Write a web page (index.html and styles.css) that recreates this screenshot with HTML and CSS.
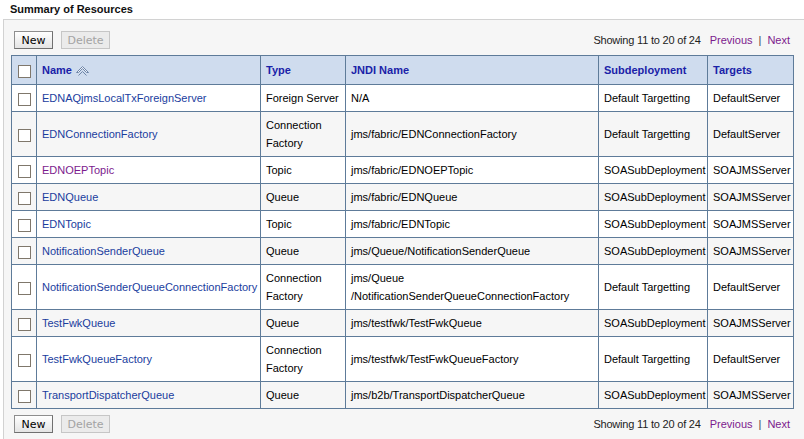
FILE: index.html
```html
<!DOCTYPE html>
<html>
<head>
<meta charset="utf-8">
<link rel="stylesheet" href="styles.css">
</head>
<body>
<div class="title">Summary of Resources</div>
<div class="panel">
  <div class="bar">
    <div class="buttons">
      <span class="btn">New</span>
      <span class="btn disabled">Delete</span>
    </div>
    <div class="pager">
      <span class="showing">Showing 11 to 20 of 24</span>
      <a class="plink">Previous</a>
      <span class="sep">|</span>
      <a class="plink">Next</a>
    </div>
  </div>
  <table class="grid">
    <colgroup>
      <col class="c-check"><col class="c-name"><col class="c-type"><col class="c-jndi"><col class="c-sub"><col class="c-tgt">
    </colgroup>
    <thead>
      <tr>
        <th class="chk"><span class="box"></span></th>
        <th><span class="hname">Name</span><svg class="sort" width="13" height="10" viewBox="0 0 13 10"><path d="M0.5 6.5 L6.5 0.5 L12.5 6.5 L10.5 6.5 L6.5 2.5 L2.5 6.5 Z" fill="#eef2f8" stroke="#6f86a8" stroke-width="1"/><path d="M2.5 9.5 L6.5 5.5 L10.5 9.5" fill="none" stroke="#6f86a8" stroke-width="1"/></svg></th>
        <th>Type</th>
        <th>JNDI Name</th>
        <th>Subdeployment</th>
        <th>Targets</th>
      </tr>
    </thead>
    <tbody>
      <tr><td class="chk"><span class="box"></span></td><td><a class="lnk">EDNAQjmsLocalTxForeignServer</a></td><td>Foreign Server</td><td>N/A</td><td>Default Targetting</td><td>DefaultServer</td></tr>
      <tr class="alt"><td class="chk"><span class="box"></span></td><td><a class="lnk">EDNConnectionFactory</a></td><td>Connection Factory</td><td>jms/fabric/EDNConnectionFactory</td><td>Default Targetting</td><td>DefaultServer</td></tr>
      <tr><td class="chk"><span class="box"></span></td><td><a class="lnk visited">EDNOEPTopic</a></td><td>Topic</td><td>jms/fabric/EDNOEPTopic</td><td>SOASubDeployment</td><td>SOAJMSServer</td></tr>
      <tr class="alt"><td class="chk"><span class="box"></span></td><td><a class="lnk">EDNQueue</a></td><td>Queue</td><td>jms/fabric/EDNQueue</td><td>SOASubDeployment</td><td>SOAJMSServer</td></tr>
      <tr><td class="chk"><span class="box"></span></td><td><a class="lnk">EDNTopic</a></td><td>Topic</td><td>jms/fabric/EDNTopic</td><td>SOASubDeployment</td><td>SOAJMSServer</td></tr>
      <tr class="alt"><td class="chk"><span class="box"></span></td><td><a class="lnk">NotificationSenderQueue</a></td><td>Queue</td><td>jms/Queue/NotificationSenderQueue</td><td>SOASubDeployment</td><td>SOAJMSServer</td></tr>
      <tr><td class="chk"><span class="box"></span></td><td><a class="lnk">NotificationSenderQueueConnectionFactory</a></td><td>Connection Factory</td><td>jms/Queue<br>/NotificationSenderQueueConnectionFactory</td><td>Default Targetting</td><td>DefaultServer</td></tr>
      <tr class="alt"><td class="chk"><span class="box"></span></td><td><a class="lnk">TestFwkQueue</a></td><td>Queue</td><td>jms/testfwk/TestFwkQueue</td><td>SOASubDeployment</td><td>SOAJMSServer</td></tr>
      <tr><td class="chk"><span class="box"></span></td><td><a class="lnk">TestFwkQueueFactory</a></td><td>Connection Factory</td><td>jms/testfwk/TestFwkQueueFactory</td><td>Default Targetting</td><td>DefaultServer</td></tr>
      <tr class="alt"><td class="chk"><span class="box"></span></td><td><a class="lnk">TransportDispatcherQueue</a></td><td>Queue</td><td>jms/b2b/TransportDispatcherQueue</td><td>SOASubDeployment</td><td>SOAJMSServer</td></tr>
    </tbody>
  </table>
  <div class="bar bottom">
    <div class="buttons">
      <span class="btn">New</span>
      <span class="btn disabled">Delete</span>
    </div>
    <div class="pager">
      <span class="showing">Showing 11 to 20 of 24</span>
      <a class="plink">Previous</a>
      <span class="sep">|</span>
      <a class="plink">Next</a>
    </div>
  </div>
</div>
</body>
</html>
```
FILE: styles.css
```css
html, body {
  margin: 0;
  padding: 0;
  background: #ffffff;
  font-family: "Liberation Sans", Arial, sans-serif;
  font-size: 11px;
  color: #000;
  overflow: hidden;
}
.title {
  height: 19px;
  line-height: 18px;
  padding-left: 10px;
  font-weight: bold;
  font-size: 11px;
  color: #111;
}
.panel {
  margin-left: 3px;
  border-left: 1px solid #d2d2d2;
  border-top: 1px solid #d2d2d2;
  background: #f6f6f6;
  padding: 11px 11px 6px 7px;
}
.bar {
  display: flex;
  justify-content: space-between;
  align-items: center;
  height: 18px;
  margin-bottom: 6px;
}
.bar.bottom {
  margin-top: 6px;
  margin-bottom: 0;
}
.buttons {
  display: flex;
  gap: 8px;
  padding-left: 3px;
}
.btn {
  display: flex;
  align-items: center;
  justify-content: center;
  box-sizing: border-box;
  height: 18px;
  width: 39px;
  border: 1px solid #8e8e8e;
  border-right-color: #707070;
  border-bottom-color: #707070;
  background: linear-gradient(#ffffff, #e4e4e4);
  font-family: "DejaVu Sans", Verdana, sans-serif;
  font-size: 11px;
  color: #000;
}
.btn.disabled {
  width: 49px;
  border-color: #c6c6c6;
  background: #ebebeb;
  color: #a3a3a3;
}
.pager {
  display: flex;
  align-items: center;
  padding-right: 3px;
  color: #222;
}
.showing {
  margin-right: 9px;
  letter-spacing: -0.2px;
}
.plink {
  color: #7c1a8d;
}
.sep {
  margin: 0 6px;
  color: #444;
}
.grid {
  width: 782px;
  border-collapse: collapse;
  table-layout: fixed;
  background: #fff;
}
.c-check { width: 25px; }
.c-name { width: 224px; }
.c-type { width: 85px; }
.c-jndi { width: 253px; }
.c-sub { width: 109px; }
.c-tgt { width: 86px; }
.grid th, .grid td {
  border: 1px solid #5e7b99;
  text-align: left;
  vertical-align: middle;
  padding: 4px 4px 4px 5px;
  line-height: 18px;
  white-space: normal;
}
.grid th {
  background: #cfdcee;
  color: #1a22a8;
  font-weight: bold;
  height: 20px;
  padding-top: 4px;
  padding-bottom: 4px;
}
.grid tr.alt td {
  background: #f6f6f6;
}
.grid td.chk, .grid th.chk {
  padding: 0;
  text-align: center;
}
.box {
  display: inline-block;
  width: 11px;
  height: 11px;
  border: 1px solid #7f776b;
  background: #fff;
  vertical-align: middle;
}
.hname {
  vertical-align: middle;
}
.sort {
  vertical-align: middle;
  margin-left: 4px;
}
.lnk {
  color: #1a3d9e;
}
.lnk.visited {
  color: #7c1a8d;
}
```
